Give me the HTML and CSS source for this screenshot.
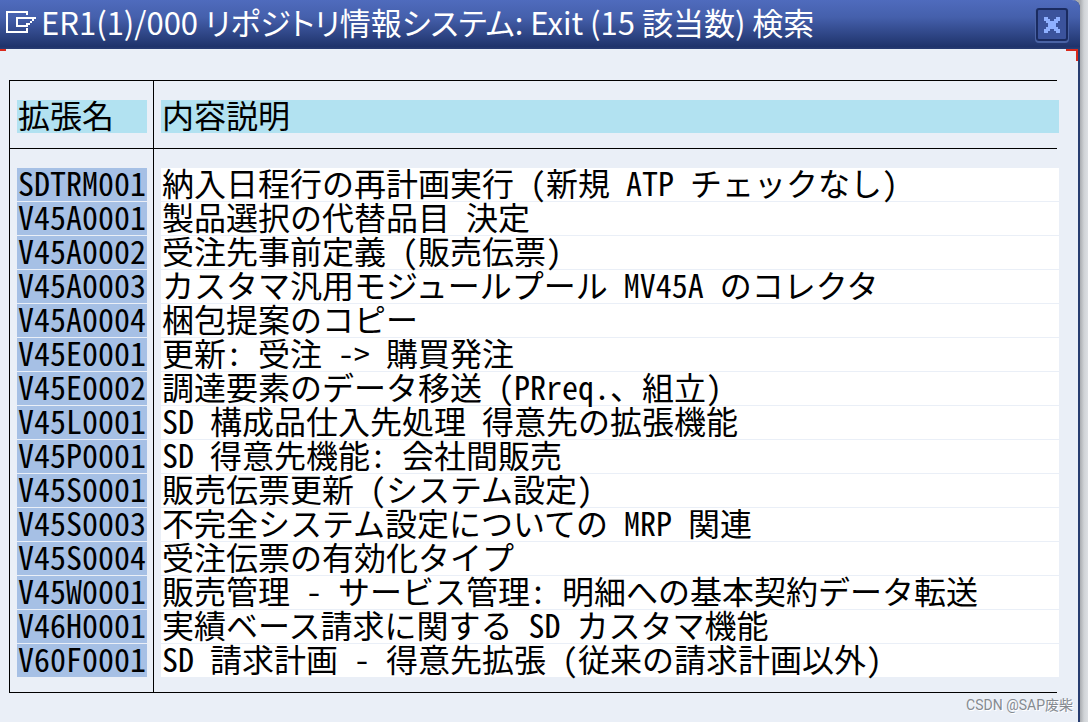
FILE: index.html
```
<!DOCTYPE html>
<html lang="ja">
<head>
<meta charset="utf-8">
<title>リポジトリ情報システム</title>
<link rel="stylesheet" href="styles.css">
</head>
<body>
<div class="window">
  <header class="titlebar">
    <svg class="title-icon" viewBox="0 0 30 22" aria-hidden="true" shape-rendering="crispEdges">
      <path d="M21 4V1H1V21H21V17" fill="none" stroke="#fff" stroke-width="2"/>
      <path d="M10 6h20v2h-2v2h-2v2h-2v2h-2v2H10zM12 8v6h8v-2h4v-2h2V8z" fill="#fff" fill-rule="evenodd"/>
    </svg>
    <h1 class="title">ER1(1)/000 リポジトリ情報システム: Exit (15 該当数) 検索</h1>
    <button class="close" type="button" aria-label="閉じる">
      <svg class="close-icon" viewBox="0 0 16 16" aria-hidden="true" shape-rendering="crispEdges">
        <path d="M0 0h4v2h2v2h4V2h2V0h4v4h-2v2h-2v4h2v2h2v4h-4v-2h-2v-2H6v2H4v2H0v-4h2v-2h2V6H2V4H0z" fill="#8fb0ff"/>
      </svg>
    </button>
  </header>
  <main class="content">
    <table class="list">
      <thead>
        <tr><th class="name" scope="col"><span class="fill">拡張名</span></th><th class="desc" scope="col"><span class="fill">内容説明</span></th></tr>
      </thead>
      <tbody>
        <tr><td class="name"><span class="fill">SDTRM001</span></td><td class="desc"><span class="fill">納入日程行の再計画実行 (新規 ATP チェックなし)</span></td></tr>
        <tr><td class="name"><span class="fill">V45A0001</span></td><td class="desc"><span class="fill">製品選択の代替品目 決定</span></td></tr>
        <tr><td class="name"><span class="fill">V45A0002</span></td><td class="desc"><span class="fill">受注先事前定義 (販売伝票)</span></td></tr>
        <tr><td class="name"><span class="fill">V45A0003</span></td><td class="desc"><span class="fill">カスタマ汎用モジュールプール MV45A のコレクタ</span></td></tr>
        <tr><td class="name"><span class="fill">V45A0004</span></td><td class="desc"><span class="fill">梱包提案のコピー</span></td></tr>
        <tr><td class="name"><span class="fill">V45E0001</span></td><td class="desc"><span class="fill">更新: 受注 -&gt; 購買発注</span></td></tr>
        <tr><td class="name"><span class="fill">V45E0002</span></td><td class="desc"><span class="fill">調達要素のデータ移送 (PRreq.、組立)</span></td></tr>
        <tr><td class="name"><span class="fill">V45L0001</span></td><td class="desc"><span class="fill">SD 構成品仕入先処理 得意先の拡張機能</span></td></tr>
        <tr><td class="name"><span class="fill">V45P0001</span></td><td class="desc"><span class="fill">SD 得意先機能: 会社間販売</span></td></tr>
        <tr><td class="name"><span class="fill">V45S0001</span></td><td class="desc"><span class="fill">販売伝票更新 (システム設定)</span></td></tr>
        <tr><td class="name"><span class="fill">V45S0003</span></td><td class="desc"><span class="fill">不完全システム設定についての MRP 関連</span></td></tr>
        <tr><td class="name"><span class="fill">V45S0004</span></td><td class="desc"><span class="fill">受注伝票の有効化タイプ</span></td></tr>
        <tr><td class="name"><span class="fill">V45W0001</span></td><td class="desc"><span class="fill">販売管理 - サービス管理: 明細への基本契約データ転送</span></td></tr>
        <tr><td class="name"><span class="fill">V46H0001</span></td><td class="desc"><span class="fill">実績ベース請求に関する SD カスタマ機能</span></td></tr>
        <tr><td class="name"><span class="fill">V60F0001</span></td><td class="desc"><span class="fill">SD 請求計画 - 得意先拡張 (従来の請求計画以外)</span></td></tr>
      </tbody>
    </table>
    <span class="corner corner-left"></span>
    <span class="corner corner-right"></span>
  </main>
</div>
<div class="watermark">CSDN @SAP废柴</div>
</body>
</html>
```
FILE: styles.css
```
* { box-sizing: border-box; }

body {
  margin: 0;
  position: relative;
  min-height: 100vh;
  padding-right: 8px;
  background: linear-gradient(to left, #dcdfe3, #d0d3d6 4px, #a9acb0 8px, #a9acb0);
  color: #000;
  font-family: "Noto Sans CJK JP", sans-serif;
}

.window {
  display: flex;
  flex-direction: column;
  min-height: 100vh;
  background: #eaeff7;
  border-right: 2px solid #273c6f;
  border-top-right-radius: 8px;
}

.titlebar {
  display: flex;
  align-items: center;
  height: 49px;
  margin-right: -2px;
  padding: 0 12px 0 6px;
  border-top-right-radius: 8px;
  background: linear-gradient(#4f6bbd, #4560ac 35%, #1f336b 95%, #283c72);
}

.title-icon { width: 30px; height: 22px; margin-bottom: 5px; flex: none; }

.title {
  flex: 1;
  margin: 0 0 5px 5px;
  color: #fff;
  font-size: 31px;
  font-weight: 400;
  line-height: 44px;
  white-space: nowrap;
  font-feature-settings: "palt";
}

.close {
  display: flex;
  align-items: center;
  justify-content: center;
  width: 32px;
  height: 33px;
  padding: 0;
  border: 2px solid #1a2b60;
  border-radius: 3px;
  background: #3b539c;
  box-shadow: 0 1px 0 1px #4a63a5;
}

.close-icon { width: 16px; height: 16px; }

.content {
  position: relative;
  flex: 1;
  padding: 31px 21px 29px 9px;
}

.list {
  width: 100%;
  table-layout: fixed;
  border-collapse: separate;
  border-spacing: 0;
  border-bottom: 1px solid #000;
  font-size: 32px;
  line-height: 29px;
  font-feature-settings: "hwid";
}

.list th,
.list td {
  padding: 0 0 1px 7px;
  border-left: 1px solid #000;
  font-weight: 400;
  text-align: left;
  white-space: nowrap;
}

.list .name { width: 144px; padding-right: 6px; }

.list th {
  padding-top: 19px;
  padding-bottom: 15px;
  border-top: 1px solid #000;
  border-bottom: 1px solid #000;
}

.list tbody tr:first-child td { padding-top: 19px; }
.list tbody tr:last-child td { padding-bottom: 15px; }

.fill {
  display: block;
  height: 33px;
  padding-left: 1px;
}

.desc .fill { margin-right: -2px; background: #fff; }
.name .fill { background: #a6c0e5; }
.list th .fill { background: #b2e2f1; }

.corner { position: absolute; top: 0; border: 0 solid #d9291c; }
.corner-left { left: 0; width: 6px; border-top-width: 2px; }
.corner-right { right: 0; width: 12px; height: 12px; border-top-width: 2px; border-right-width: 2px; }

.watermark {
  position: absolute;
  right: 15px;
  bottom: 7px;
  color: #858a90;
  font: 14px/20px Roboto, "Noto Sans CJK SC", sans-serif;
  text-shadow: 1px 1px 0 #fff;
}
```
